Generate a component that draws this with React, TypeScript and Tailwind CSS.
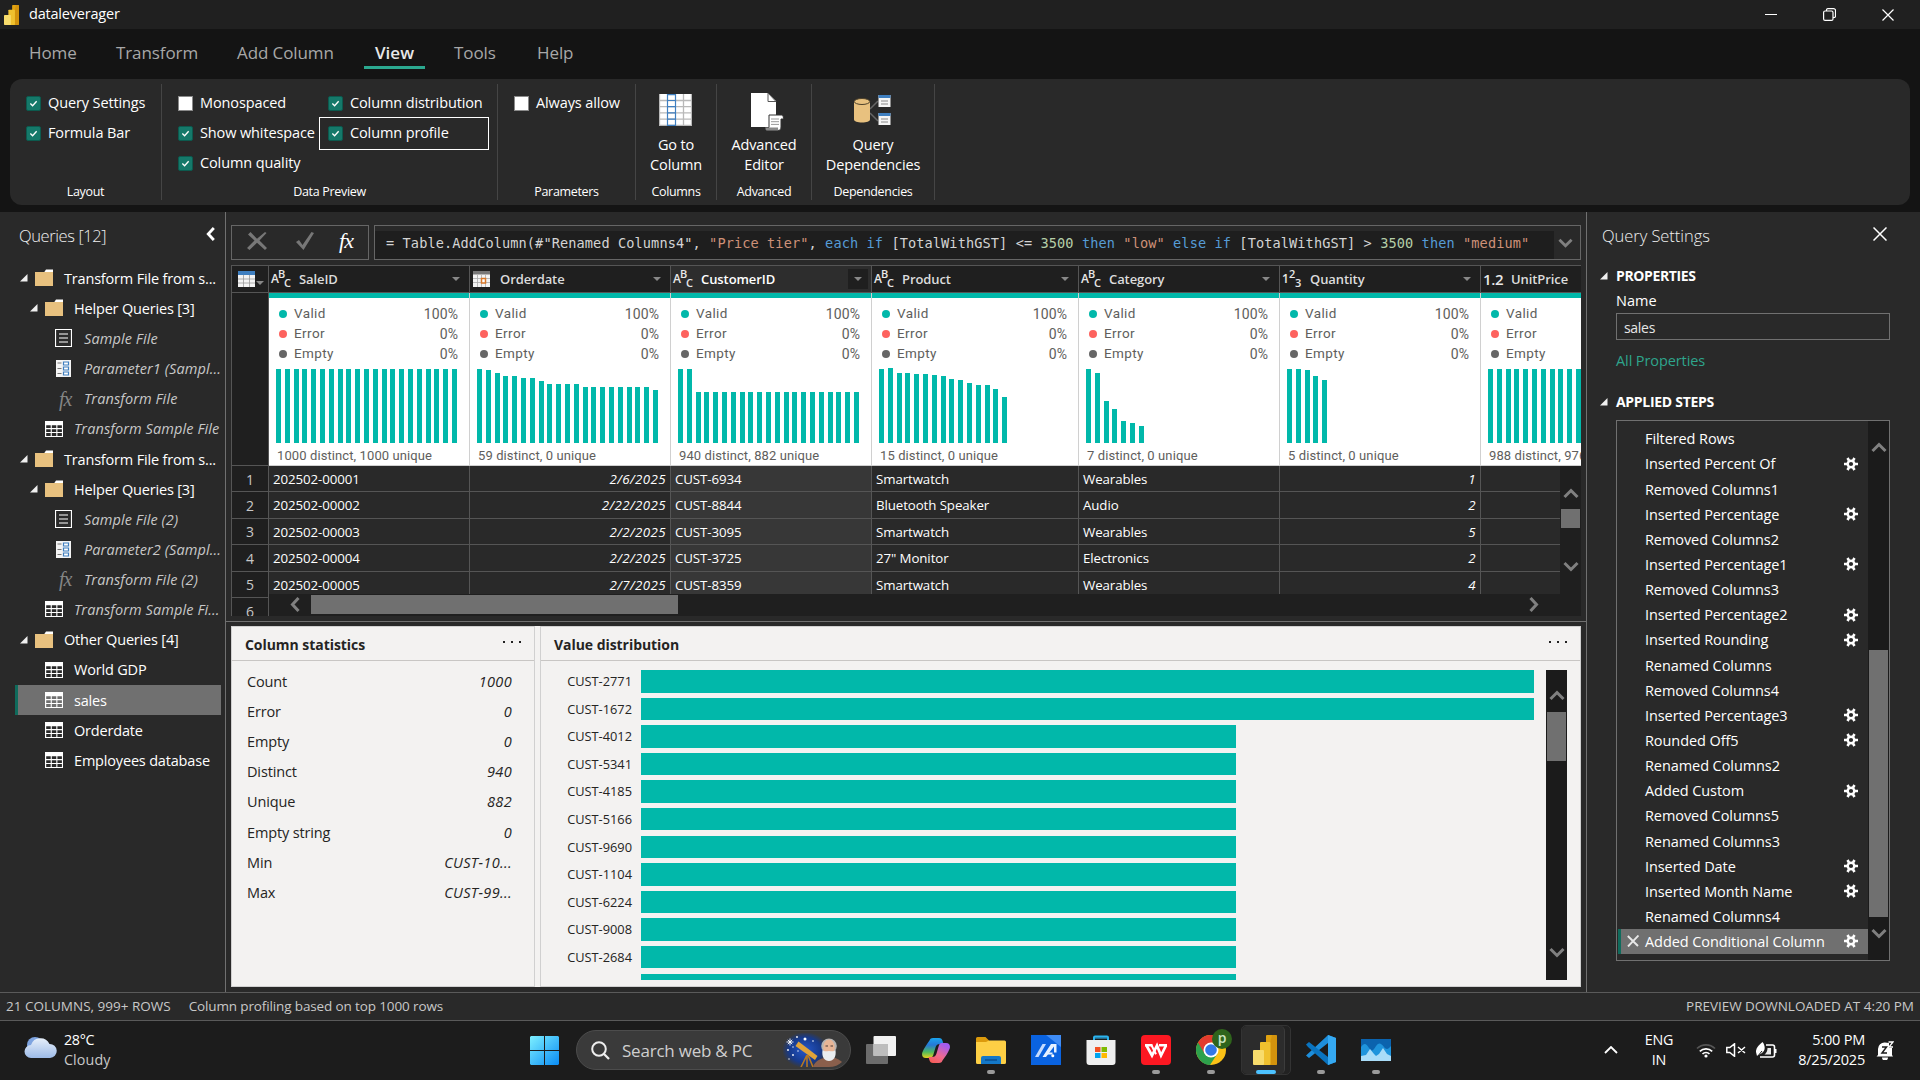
import React from 'react';

type IconKind = 'folder' | 'list' | 'param' | 'fx' | 'table';

/* ---------- small glyphs ---------- */

function PowerBI({ className }: { className: string }) {
  return (
    <svg viewBox="0 0 24 30" preserveAspectRatio="none" className={className}>
      <rect x="13" y="0" width="11" height="30" rx="1" fill="#e0a210" />
      <path d="M19 0h4a1 1 0 0 1 1 1v28a1 1 0 0 1-1 1h-6V9z" fill="#c9860b" opacity=".55" />
      <rect x="7" y="7" width="10.500" height="23" rx="1" fill="#f0c12e" />
      <rect x="0" y="15" width="11" height="15" rx="1" fill="#f8dc6c" />
    </svg>
  );
}

function Check({ on, label }: { on?: boolean; label: string }) {
  return (
    <div className="flex h-[30px] items-center gap-[7px]">
      {on ? (
        <div className="flex h-[15px] w-[15px] items-center justify-center rounded-[2px] border border-[#0c5a4e] bg-[#15796a]">
          <svg viewBox="0 0 10 10" className="h-[9px] w-[9px]"><path d="M1.500 5l2.500 2.500L8.500 2.500" fill="none" stroke="#fff" strokeWidth="1.500" /></svg>
        </div>
      ) : (
        <div className="h-[15px] w-[15px] border border-[#8a8a8a] bg-white" />
      )}
      <span className="whitespace-nowrap text-[14.500px] leading-none tracking-[-0.12px]">{label}</span>
    </div>
  );
}

function Chevron({ dir, className }: { dir: 'up' | 'down' | 'left' | 'right'; className: string }) {
  const d = { up: 'M1.500 10L8 3.500 14.500 10', down: 'M1.500 4L8 10.500 14.500 4', left: 'M10.500 1L4.500 7.500 10.500 14', right: 'M5.500 1l6 6.500-6 6.500' }[dir];
  return (
    <svg viewBox="0 0 16 15" className={className}><path d={d} fill="none" stroke="currentColor" strokeWidth="3" /></svg>
  );
}

function TableIcon({ className }: { className: string }) {
  return (
    <svg viewBox="0 0 18 16" className={className}>
      <path d="M0 0h18v16H0z" fill="#fff" />
      <path d="M1.200 4.200h4.500v2.900H1.200zM6.800 4.200h4.500v2.900H6.800zM12.400 4.200h4.500v2.900h-4.500zM1.200 8.200h4.500v2.800H1.200zM6.800 8.200h4.500v2.800H6.800zM12.400 8.200h4.500v2.800h-4.500zM1.200 12.100h4.500v2.800H1.200zM6.800 12.100h4.500v2.800H6.800zM12.400 12.100h4.500v2.800h-4.500z" fill="currentColor" />
    </svg>
  );
}

function NodeIcon({ kind, selected }: { kind: IconKind; selected?: boolean }) {
  if (kind === 'folder')
    return (
      <svg viewBox="0 0 18 17" className="mb-px h-[17px] w-[18px]">
        <path d="M9 3.500L11 .5h7V5H9z" fill="#fff" />
        <path d="M0 3h18v14H0z" fill="#e8c17f" />
        <path d="M11 1.500h6.500V3H10z" fill="#fff" />
      </svg>
    );
  if (kind === 'list')
    return (
      <svg viewBox="0 0 17 18" className="h-[18px] w-[17px]">
        <path d="M.5.500h16v17H.5zM4 5h9M4 9h9M4 13h9" fill="none" stroke="#fff" strokeWidth="1.200" />
      </svg>
    );
  if (kind === 'param')
    return (
      <svg viewBox="0 0 15 17" className="mx-[1px] h-[17px] w-[15px]">
        <path d="M0 0h15v17H0z" fill="#f4f4f4" />
        <path d="M1.500 3h4M1.500 8.500h4M1.500 13.500h4" stroke="#777" strokeWidth="1" />
        <path d="M7.500 2h5v3h-5zM7.500 7h5v3h-5zM7.500 12h5v3h-5z" fill="#fff" stroke="#3f7fc0" strokeWidth="1.200" />
      </svg>
    );
  if (kind === 'fx')
    return <span className="w-[17px] pl-[4px] font-['Liberation_Serif',serif] text-[20px] italic leading-none tracking-[-1px] text-[#858585]">fx</span>;
  return <TableIcon className={selected ? 'h-[16px] w-[18px] text-[#707070]' : 'h-[16px] w-[18px] text-[#292929]'} />;
}

function Tri() {
  return (
    <svg viewBox="0 0 8 8" className="h-[8px] w-[8px]"><path d="M7.500 0v7.500H0z" fill="#f0f0f0" /></svg>
  );
}

function Gear() {
  return (
    <svg viewBox="0 0 14 14" className="h-[14px] w-[14px]">
      <g stroke="#fff" strokeWidth="2.600">
        <path d="M0 7h3M11 7h3M3.500 1l1.500 2.600M9 10.400l1.500 2.600M3.500 13L5 10.400M9 3.600L10.500 1" />
      </g>
      <circle cx="7" cy="7" r="3.300" fill="none" stroke="#fff" strokeWidth="2.400" />
    </svg>
  );
}

function Dots() {
  return (
    <div className="mb-[3px] flex gap-[6px]">
      {[0, 1, 2].map((i) => <span key={i} className="h-[2px] w-[2px] bg-[#222]" />)}
    </div>
  );
}

/* ---------- ribbon ---------- */

const tabs: [string, string][] = [
  ['Home', 'w-[47px]'], ['Transform', 'w-[80px]'], ['Add Column', 'w-[98px]'], ['View', 'w-[61px]'], ['Tools', 'w-[43px]'], ['Help', 'w-[37px]'],
];

function Group({ label, className, children }: { label: string; className: string; children: React.ReactNode }) {
  return (
    <div className={`flex h-[116px] shrink-0 flex-col justify-between border-r border-[#454545] ${className}`}>
      {children}
      <div className="pb-[2px] text-center text-[12.500px] leading-[12px] tracking-[-0.32px]">{label}</div>
    </div>
  );
}

function BigButton({ icon, a, b }: { icon: React.ReactNode; a: string; b: string }) {
  return (
    <div className="flex flex-col items-center pt-[8px]">
      <div className="flex h-[43px] items-start">{icon}</div>
      <div className="text-center text-[14.500px] leading-[20px] tracking-[-0.15px]">{a}<br />{b}</div>
    </div>
  );
}

function Ribbon() {
  return (
    <div className="mx-[10px] flex h-[126px] rounded-[12px] bg-[#292929] py-[5px] text-white">
      <Group label="Layout" className="w-[152px]">
        <div className="pl-[16px] pt-[4px]"><Check on label="Query Settings" /><Check on label="Formula Bar" /></div>
      </Group>
      <Group label="Data Preview" className="w-[336px]">
        <div className="flex pl-[16px] pt-[4px]">
          <div className="w-[141px]"><Check label="Monospaced" /><Check on label="Show whitespace" /><Check on label="Column quality" /></div>
          <div>
            <div className="pl-[9px]"><Check on label="Column distribution" /></div>
            <div className="-mt-px flex h-[33px] w-[170px] items-center border border-white pl-[8px]"><Check on label="Column profile" /></div>
          </div>
        </div>
      </Group>
      <Group label="Parameters" className="w-[138px]">
        <div className="pl-[16px] pt-[4px]"><Check label="Always allow" /></div>
      </Group>
      <Group label="Columns" className="w-[81px]">
        <BigButton a="Go to" b="Column" icon={
          <svg viewBox="0 0 33 32" className="mr-[2px] mt-[2px] h-[32px] w-[33px]">
            <path d="M0 0h33v32H0z" fill="#fff" />
            <path d="M0 6.500h33M0 12.700h33M0 18.900h33M0 25.100h33M0 31.500h33M24.500 0v32M32.500 0v32M.5 0v32" stroke="#b9b9b9" strokeWidth="1.300" />
            <path d="M8.500.6h8v30.800h-8zM8.500 6.500h8M8.500 12.700h8M8.500 18.900h8M8.500 25.100h8" fill="none" stroke="#3f7fc0" strokeWidth="1.200" />
          </svg>} />
      </Group>
      <Group label="Advanced" className="w-[95px]">
        <BigButton a="Advanced" b="Editor" icon={
          <svg viewBox="0 0 33 38" className="ml-[6px] mt-[1px] h-[38px] w-[33px]">
            <path d="M0 0h17l8 8v26H0z" fill="#fff" />
            <path d="M17 0v8.500h8z" fill="#fff" stroke="#555" strokeWidth="1" />
            <path d="M18 22h13c1.500 0 1.500 4 1.500 4H30v8c0 2-1 3.500-3 3.500H16c-2 0-1.500-3-1.500-3H18z" fill="#fff" stroke="#333" strokeWidth="1" />
            <path d="M14.500 34.500H27c0 2 .5 3 0 3H16c-1.500 0-1.500-3-1.500-3z" fill="#8a8a8a" />
            <path d="M20 26h8M20 28.700h8M20 31.400h8" stroke="#999" />
          </svg>} />
      </Group>
      <Group label="Dependencies" className="w-[123px]">
        <BigButton a="Query" b="Dependencies" icon={
          <svg viewBox="0 0 37 32" className="mr-[1px] mt-[3px] h-[32px] w-[37px]">
            <path d="M16 14l8-8M16 18l8 8" stroke="#666" strokeWidth="1.500" />
            <path d="M0 6.500v18c0 2 3.500 3 8 3s8-1 8-3v-18z" fill="#e8c17f" />
            <ellipse cx="8" cy="6.500" rx="7.800" ry="3" fill="#e8c17f" stroke="#4d412b" strokeWidth="1" />
            <path d="M24.500 0h12v12h-12zM24.500 18h12v12h-12z" fill="#f5f5f5" />
            <path d="M24.500 0h12v3h-12zM24.500 18h12v3h-12z" fill="#3f7fc0" />
            <path d="M27 6h7M27 9h7M27 24h7M27 27h7" stroke="#888" strokeWidth="1.200" />
          </svg>} />
      </Group>
    </div>
  );
}

/* ---------- queries tree ---------- */

const tree: { level: number; icon: IconKind; label: string; italic?: boolean; selected?: boolean }[] = [
  { level: 0, icon: 'folder', label: 'Transform File from s...' },
  { level: 1, icon: 'folder', label: 'Helper Queries [3]' },
  { level: 2, icon: 'list', label: 'Sample File', italic: true },
  { level: 2, icon: 'param', label: 'Parameter1 (Sampl...', italic: true },
  { level: 2, icon: 'fx', label: 'Transform File', italic: true },
  { level: 1, icon: 'table', label: 'Transform Sample File', italic: true },
  { level: 0, icon: 'folder', label: 'Transform File from s...' },
  { level: 1, icon: 'folder', label: 'Helper Queries [3]' },
  { level: 2, icon: 'list', label: 'Sample File (2)', italic: true },
  { level: 2, icon: 'param', label: 'Parameter2 (Sampl...', italic: true },
  { level: 2, icon: 'fx', label: 'Transform File (2)', italic: true },
  { level: 1, icon: 'table', label: 'Transform Sample Fi...', italic: true },
  { level: 0, icon: 'folder', label: 'Other Queries [4]' },
  { level: 1, icon: 'table', label: 'World GDP' },
  { level: 1, icon: 'table', label: 'sales', selected: true },
  { level: 1, icon: 'table', label: 'Orderdate' },
  { level: 1, icon: 'table', label: 'Employees database' },
];

const indent = ['pl-[2px]', 'pl-[12px]', 'pl-[22px]'];

function QueriesPanel() {
  return (
    <div className="w-[226px] shrink-0 overflow-hidden border-r border-[#707070] pl-[15px] pr-[4px]">
      <div className="flex h-[51px] items-start justify-between pl-[4px] pr-[2px] pt-[14px]">
        <span className="text-[16.500px] font-light leading-[20px] tracking-[-0.4px] text-[#f0f0f0]">Queries [12]</span>
        <Chevron dir="left" className="mt-px h-[14px] w-[15px] text-white" />
      </div>
      {tree.map((n, i) => (
        <div key={i} className={`flex h-[30.140px] items-center border-l-[3px] ${n.selected ? 'border-[#0f6b5c] bg-[#707070]' : 'border-transparent'}`}>
          <div className={`flex items-center ${indent[n.level]}`}>
            <div className="w-[15px]">{n.icon === 'folder' && <Tri />}</div>
            <div className="flex w-[29px] items-center"><NodeIcon kind={n.icon} selected={n.selected} /></div>
            <span className={`whitespace-nowrap pt-[2px] text-[14.500px] leading-none ${n.italic ? 'italic tracking-[0.1px] text-[#c8c8c8]' : 'tracking-[-0.18px] text-white'}`}>{n.label}</span>
          </div>
        </div>
      ))}
    </div>
  );
}

/* ---------- formula bar ---------- */

const formula: [string, string][] = [
  ['= Table.AddColumn(#"Renamed Columns4", ', 'text-[#d4d4d4]'],
  ['"Price tier"', 'text-[#ce9178]'],
  [', ', 'text-[#d4d4d4]'],
  ['each if ', 'text-[#569cd6]'],
  ['[TotalWithGST] <= ', 'text-[#d4d4d4]'],
  ['3500 ', 'text-[#b5cea8]'],
  ['then ', 'text-[#569cd6]'],
  ['"low" ', 'text-[#ce9178]'],
  ['else if ', 'text-[#569cd6]'],
  ['[TotalWithGST] > ', 'text-[#d4d4d4]'],
  ['3500 ', 'text-[#b5cea8]'],
  ['then ', 'text-[#569cd6]'],
  ['"medium"', 'text-[#ce9178]'],
];

function FormulaBar() {
  return (
    <div className="flex h-[35px] gap-[5px]">
      <div className="flex w-[138px] items-center justify-between border border-[#666] pb-[3px] pl-[15px] pr-[15px]">
        <svg viewBox="0 0 20 18" className="h-[18px] w-[20px]"><path d="M1 2.500L3.500 0 10 6.800 18 0l1.500 1-7 7.500L20 16l-2 2-8-7.200L2.500 18 0 16l7.500-7.500z" fill="#777" /></svg>
        <svg viewBox="0 0 18 18" className="ml-[4px] h-[18px] w-[18px]"><path d="M0 10l3-2 3.500 5L15.500 0 18 1 7.500 18z" fill="#777" /></svg>
        <span className="font-['Liberation_Serif',serif] text-[22px] italic leading-none tracking-[-1px] text-white">fx</span>
      </div>
      <div className="flex flex-1 border border-[#666] pt-[5px]">
        <div className="flex w-[1179px] items-center overflow-hidden bg-[#1e1e1e] pl-[11px]">
          <span className="whitespace-pre pb-[3px] font-['DejaVu_Sans_Mono',monospace] text-[13.600px] leading-none tracking-[0.1px]">
            {formula.map(([t, c], i) => <span key={i} className={c}>{t}</span>)}
          </span>
        </div>
        <div className="flex flex-1 items-center justify-center pb-[4px] pr-[4px] text-[#808080]">
          <Chevron dir="down" className="h-[14px] w-[15px]" />
        </div>
      </div>
    </div>
  );
}

/* ---------- data grid ---------- */

const full = (n: number, h: number) => Array.from({ length: n }, () => h);

const columns: { name: string; type: 'abc' | 'date' | '123' | '1.2'; w: string; bars: number[]; note: string; data: string[]; right?: boolean; selected?: boolean }[] = [
  { name: 'SaleID', type: 'abc', w: 'w-[201px]', bars: full(21, 74), note: '1000 distinct, 1000 unique', data: ['202502-00001', '202502-00002', '202502-00003', '202502-00004', '202502-00005'] },
  { name: 'Orderdate', type: 'date', w: 'w-[201px]', bars: [74, 73, 70, 67, 67, 65, 65, 62, 59, 59, 59, 59, ...full(8, 56), 53], note: '59 distinct, 0 unique', data: ['2/6/2025', '2/22/2025', '2/2/2025', '2/2/2025', '2/7/2025'], right: true },
  { name: 'CustomerID', type: 'abc', w: 'w-[201px]', bars: [74, 74, ...full(19, 51)], note: '940 distinct, 882 unique', data: ['CUST-6934', 'CUST-8844', 'CUST-3095', 'CUST-3725', 'CUST-8359'], selected: true },
  { name: 'Product', type: 'abc', w: 'w-[207px]', bars: [74, 75, 70, 70, 69, 69, 68, 67, 64, 63, 60, 58, 58, 54, 46], note: '15 distinct, 0 unique', data: ['Smartwatch', 'Bluetooth Speaker', 'Smartwatch', '27" Monitor', 'Smartwatch'] },
  { name: 'Category', type: 'abc', w: 'w-[201px]', bars: [74, 70, 42, 34, 22, 20, 17], note: '7 distinct, 0 unique', data: ['Wearables', 'Audio', 'Wearables', 'Electronics', 'Wearables'] },
  { name: 'Quantity', type: '123', w: 'w-[201px]', bars: [74, 74, 73, 67, 63], note: '5 distinct, 0 unique', data: ['1', '2', '5', '2', '4'], right: true },
  { name: 'UnitPrice', type: '1.2', w: 'w-[101px]', bars: full(11, 74), note: '988 distinct, 976', data: ['', '', '', '', ''] },
];

function TypeIcon({ type }: { type: string }) {
  if (type === 'date')
    return (
      <svg viewBox="0 0 17 16" className="ml-px h-[16px] w-[17px]">
        <path d="M0 0h17v16H0z" fill="#f3f3f3" />
        <path d="M0 0h17v3.500H0z" fill="#777" />
        <path d="M0 7.500h17M0 11.500h17M4.500 4v12M8.500 4v12M12.500 4v12" stroke="#aaa" strokeWidth=".8" />
        <path d="M8.500 7.500h4v4.500h-4z" fill="#fff" stroke="#d8782a" strokeWidth="1.500" />
      </svg>
    );
  if (type === '1.2') return <span className="text-[15px] font-semibold leading-none tracking-[-0.3px] text-[#e8e8e8]">1.2</span>;
  const [a, b, c] = type === 'abc' ? ['A', 'B', 'C'] : ['1', '2', '3'];
  return (
    <div className="flex h-[18px] w-[20px] items-start font-semibold leading-none text-[#e8e8e8]">
      <span className="w-[7px] pt-[3px] text-[12px]">{a}</span>
      <span className="-mt-[2px] w-[6px] text-[11px]">{b}</span>
      <span className="pt-[7px] text-[11px]">{c}</span>
    </div>
  );
}

const quality: [string, string, string][] = [
  ['Valid', '100%', 'bg-[#01b8aa]'], ['Error', '0%', 'bg-[#fd625e]'], ['Empty', '0%', 'bg-[#666666]'],
];

function DataGrid() {
  return (
    <div className="mt-[5px] flex h-[351px] overflow-hidden border-t border-[#555]">
      <div className="w-[38px] shrink-0 overflow-hidden border-x border-[#555] bg-[#1f1f1f]">
        <div className="flex h-[27px] items-center gap-[1px] border-b border-[#555] pl-[6px]">
          <svg viewBox="0 0 17 16" className="h-[16px] w-[17px]">
            <path d="M0 0h17v16H0z" fill="#f3f3f3" /><path d="M0 0h17v4H0z" fill="#3f7fc0" />
            <path d="M0 8h17M0 12h17M5.500 4v12M11.500 4v12" stroke="#999" strokeWidth=".8" />
          </svg>
          <svg viewBox="0 0 8 4" className="mt-[8px] h-[4px] w-[8px]"><path d="M0 0h8L4 4z" fill="#888" /></svg>
        </div>
        <div className="h-[173px] border-b border-[#555]" />
        {[1, 2, 3, 4, 5, 6].map((n) => (
          <div key={n} className="flex h-[26.400px] items-center justify-center border-b border-[#555] pt-[2px] text-[14px] leading-none text-[#c8c8c8]">{n}</div>
        ))}
      </div>
      <div className="flex w-[1312px] flex-col">
        <div className="flex h-[200px] w-full overflow-hidden">
          {columns.map((c) => (
            <div key={c.name} className={`${c.w} shrink-0`}>
              <div className={`flex h-[27px] items-center border-b border-r border-[#555] pl-[2px] pr-[3px] ${c.selected ? 'bg-[#2d2d2d]' : 'bg-[#1f1f1f]'}`}>
                <div className="w-[28px] shrink-0"><TypeIcon type={c.type} /></div>
                <span className={`flex-1 text-[13px] font-semibold leading-none tracking-[-0.08px] ${c.selected ? 'text-white' : 'text-[#dcdcdc]'}`}>{c.name}</span>
                {c.type !== '1.2' && (
                  <div className={`flex h-[20px] w-[20px] items-center justify-center ${c.selected ? 'bg-[#1f1f1f]' : ''}`}>
                    <svg viewBox="0 0 8 4" className="h-[4px] w-[8px]"><path d="M0 0h8L4 4z" fill="#888" /></svg>
                  </div>
                )}
              </div>
              <div className="h-[173px] overflow-hidden border-b border-r border-[#d0d0d0] bg-white font-['Roboto',sans-serif] text-[#605e5c]">
                <div className="h-[5px] bg-[#01b8aa]" />
                <div className="pl-[10px] pr-[11px] pt-[6px]">
                  {quality.map(([l, v, dot]) => (
                    <div key={l} className="flex h-[20px] items-center text-[13.500px] leading-none tracking-[0.4px]">
                      <span className={`mb-px mr-[7px] h-[8px] w-[8px] rounded-full ${dot}`} />
                      <span className="flex-1">{l}</span>
                      {c.type !== '1.2' && <span className="text-[14px] tracking-[0.1px]">{v}</span>}
                    </div>
                  ))}
                </div>
                <div className="-mt-px ml-[7px] flex h-[80px] items-end gap-[3.800px]">
                  {c.bars.map((h, i) => <span key={i} className="w-[5px] shrink-0 bg-[#01b8aa]" style={{ height: h }} />)}
                </div>
                <div className="whitespace-nowrap pl-[8px] pt-[6px] text-[13px] leading-[13px] tracking-[0.1px]">{c.note}</div>
              </div>
            </div>
          ))}
        </div>
        <div className="flex h-[150px]">
          <div className="flex w-[1291px] flex-col">
            <div className="flex h-[128px] overflow-hidden">
              {columns.map((c) => (
                <div key={c.name} className={`${c.w} shrink-0 ${c.selected ? 'bg-[#373737]' : 'bg-[#292929]'}`}>
                  {c.data.map((v, i) => (
                    <div key={i} className={`flex h-[26.400px] items-center border-b border-r border-[#555] pl-[4px] pr-[4px] pt-[2px] text-[13.300px] leading-none text-white ${c.right ? 'justify-end italic tracking-[0.4px]' : 'tracking-[-0.1px]'}`}>{v}</div>
                  ))}
                </div>
              ))}
            </div>
            <div className="flex flex-1 items-center bg-[#1f1f1f] pb-[2px] pl-[19px] text-[#808080]">
              <Chevron dir="left" className="h-[15px] w-[16px]" />
              <div className="ml-[7px] mr-[847px] h-[19px] w-[367px] shrink-0 bg-[#707070]" />
              <Chevron dir="right" className="h-[15px] w-[16px] shrink-0" />
            </div>
          </div>
          <div className="flex w-[21px] flex-col items-center bg-[#1f1f1f] pt-[21px] text-[#808080]">
            <Chevron dir="up" className="h-[15px] w-[16px]" />
            <div className="mt-[7px] h-[19px] w-[19px] bg-[#707070]" />
            <Chevron dir="down" className="mt-[31px] h-[15px] w-[16px]" />
          </div>
        </div>
      </div>
    </div>
  );
}

/* ---------- profile panels ---------- */

const stats: [string, string][] = [
  ['Count', '1000'], ['Error', '0'], ['Empty', '0'], ['Distinct', '940'], ['Unique', '882'], ['Empty string', '0'], ['Min', 'CUST-10...'], ['Max', 'CUST-99...'],
];
const values = ['CUST-2771', 'CUST-1672', 'CUST-4012', 'CUST-5341', 'CUST-4185', 'CUST-5166', 'CUST-9690', 'CUST-1104', 'CUST-6224', 'CUST-9008', 'CUST-2684', ''];

function ProfilePanels() {
  return (
    <div className="flex h-[361px] gap-[5px] bg-[#f3f2f1] text-[#252423]">
      <div className="w-[304px] border border-[#d0d0d0]">
        <div className="flex h-[34px] items-center justify-between border-b border-[#c8c6c4] pl-[13px] pr-[13px]">
          <span className="pt-[3px] text-[14px] font-bold leading-none tracking-[-0.05px]">Column statistics</span>
          <Dots />
        </div>
        <div className="pl-[15px] pr-[22px] pt-[6px]">
          {stats.map(([k, v]) => (
            <div key={k} className="flex h-[30.150px] items-center justify-between text-[14.500px] leading-none tracking-[-0.15px]">
              <span>{k}</span><span className="italic tracking-[0.35px]">{v}</span>
            </div>
          ))}
        </div>
      </div>
      <div className="flex-1 border border-[#d0d0d0]">
        <div className="flex h-[34px] items-center justify-between border-b border-[#c8c6c4] pl-[13px] pr-[13px]">
          <span className="pt-[3px] text-[14px] font-bold leading-none tracking-[-0.05px]">Value distribution</span>
          <Dots />
        </div>
        <div className="mt-[9px] flex h-[310px]">
          <div className="flex-1 overflow-hidden">
            {values.map((v, i) => (
              <div key={i} className="flex h-[27.600px] items-start">
                <span className="w-[91px] shrink-0 pt-[5px] text-right text-[12.800px] leading-[13px]">{v}</span>
                <span className={`ml-[9px] h-[22.500px] bg-[#01b8aa] ${i < 2 ? 'w-[893px]' : 'w-[595px]'}`} />
              </div>
            ))}
          </div>
          <div className="mr-[13px] flex w-[21px] flex-col items-center bg-[#1b1b1b] pt-[19px] text-[#808080]">
            <Chevron dir="up" className="h-[15px] w-[16px]" />
            <div className="mt-[8px] h-[49px] w-[19px] bg-[#707070]" />
            <Chevron dir="down" className="mt-[184px] h-[15px] w-[16px]" />
          </div>
        </div>
      </div>
    </div>
  );
}

/* ---------- query settings ---------- */

const steps: [string, boolean][] = [
  ['Filtered Rows', false], ['Inserted Percent Of', true], ['Removed Columns1', false], ['Inserted Percentage', true], ['Removed Columns2', false],
  ['Inserted Percentage1', true], ['Removed Columns3', false], ['Inserted Percentage2', true], ['Inserted Rounding', true], ['Renamed Columns', false],
  ['Removed Columns4', false], ['Inserted Percentage3', true], ['Rounded Off5', true], ['Renamed Columns2', false], ['Added Custom', true],
  ['Removed Columns5', false], ['Renamed Columns3', false], ['Inserted Date', true], ['Inserted Month Name', true], ['Renamed Columns4', false],
  ['Added Conditional Column', true],
];

function SettingsPanel() {
  return (
    <div className="flex-1 border-l border-[#707070] pl-[13px] text-white">
      <div className="flex h-[53px] items-start justify-between pl-[2px] pr-[33px] pt-[14px]">
        <span className="text-[16.500px] font-light leading-[20px] tracking-[-0.05px] text-[#f0f0f0]">Query Settings</span>
        <svg viewBox="0 0 14 14" className="mt-px h-[14px] w-[14px]"><path d="M.5.500l13 13M13.500.500l-13 13" stroke="#fff" strokeWidth="1.500" /></svg>
      </div>
      <div className="flex h-[21px] items-center gap-[8px]"><Tri /><span className="text-[14px] font-bold leading-none tracking-[-0.37px]">PROPERTIES</span></div>
      <div className="ml-[16px] mr-[30px]">
        <div className="flex h-[27px] items-center pt-[4px] text-[14.500px] leading-none">Name</div>
        <div className="flex h-[27px] items-center border border-[#707070] pl-[7px] pt-[2px] text-[14px] leading-none tracking-[-0.3px] text-[#e6e6e6]">sales</div>
        <div className="flex h-[42px] items-center text-[14.500px] leading-none tracking-[-0.1px] text-[#2ea58c]">All Properties</div>
      </div>
      <div className="mt-[9px] flex h-[21px] items-center gap-[8px]"><Tri /><span className="pt-px text-[14px] font-bold leading-none tracking-[-0.3px]">APPLIED STEPS</span></div>
      <div className="ml-[16px] mr-[30px] mt-[8px] flex h-[541px] border border-[#707070]">
        <div className="flex-1 pl-px pt-[5px]">
          {steps.map(([s, gear], i) => {
            const sel = i === steps.length - 1;
            return (
              <div key={s} className={`flex h-[25.150px] items-center border-l-[3px] pr-[10px] ${sel ? 'border-[#0f6b5c] bg-[#707070]' : 'border-transparent'}`}>
                <div className="flex w-[24px] items-center pl-[6px]">
                  {sel && <svg viewBox="0 0 12 12" className="h-[12px] w-[12px]"><path d="M.8 1L11 11M11.500.500L1 11.500" stroke="#e8e8e8" strokeWidth="1.900" /></svg>}
                </div>
                <span className="flex-1 whitespace-nowrap pt-[2px] text-[14.500px] leading-none tracking-[-0.08px]">{s}</span>
                {gear && <Gear />}
              </div>
            );
          })}
        </div>
        <div className="flex w-[21px] flex-col items-center bg-[#1b1b1b] pt-[20px] text-[#808080]">
          <Chevron dir="up" className="h-[15px] w-[16px]" />
          <div className="mt-[194px] h-[267px] w-[19px] bg-[#707070]" />
          <Chevron dir="down" className="mt-[9px] h-[15px] w-[16px]" />
        </div>
      </div>
    </div>
  );
}

/* ---------- taskbar ---------- */

function Pin({ children, run }: { children: React.ReactNode; run?: boolean }) {
  return (
    <div className="flex w-[55px] shrink-0 flex-col items-center pt-[14px]">
      <div className="flex h-[30px] w-[30px] items-center justify-center">{children}</div>
      {run && <div className="mt-[5px] h-[4px] w-[8px] rounded-full bg-[#9a9a9a]" />}
    </div>
  );
}

function Taskbar() {
  return (
    <div className="flex h-[59px] items-start bg-[#1c1c1c] text-white">
      <div className="flex w-[506px] shrink-0 items-center gap-[7px] pl-[24px] pt-[9px]">
        <svg viewBox="0 0 33 24" className="mb-[4px] h-[24px] w-[33px]">
          <defs><linearGradient id="cl" x1="0" y1="0" x2="0" y2="1"><stop offset="0" stopColor="#e6effa" /><stop offset="1" stopColor="#9dbbe8" /></linearGradient></defs>
          <circle cx="11" cy="9" r="8" fill="#7ea4e0" />
          <path d="M7 22a6.500 6.500 0 0 1 0-13 10 10 0 0 1 18.500-1A7 7 0 0 1 26 22z" fill="url(#cl)" />
        </svg>
        <div className="text-[14.300px] leading-[20px]"><div className="tracking-[-0.3px]">28°C</div><div className="tracking-[0.1px] text-[#c8c8c8]">Cloudy</div></div>
      </div>
      <div className="flex w-[70px] shrink-0 justify-start pl-[24px] pt-[15px]">
        <svg viewBox="0 0 29 29" className="h-[29px] w-[29px]">
          <defs><linearGradient id="wn" x1="0" y1="0" x2="1" y2="1"><stop offset="0" stopColor="#7df0ff" /><stop offset="1" stopColor="#0a8cf5" /></linearGradient></defs>
          <path d="M1 0h13v14H0V1zM15 0h13l1 1v13H15zM0 15h14v14H1l-1-1zM15 15h14v13l-1 1H15z" fill="url(#wn)" />
        </svg>
      </div>
      <div className="mt-[9px] flex h-[40px] w-[275px] shrink-0 items-center rounded-full border border-[#4c4c4c] bg-[#3a3a3a] pl-[14px]">
        <svg viewBox="0 0 19 19" className="h-[19px] w-[19px]"><circle cx="8" cy="8" r="6.800" fill="none" stroke="#eee" strokeWidth="2" /><path d="M13 13l5 5" stroke="#eee" strokeWidth="2.300" /></svg>
        <span className="ml-[12px] w-[161px] whitespace-nowrap pt-px text-[17px] leading-none tracking-[-0.22px] text-[#cfcfcf]">Search web &amp; PC</span>
        <svg viewBox="0 0 60 34" className="h-[34px] w-[60px]">
          <defs>
            <radialGradient id="sky"><stop offset="0" stopColor="#2456c8" /><stop offset=".7" stopColor="#173a8c" /><stop offset="1" stopColor="#173a8c" stopOpacity="0" /></radialGradient>
          </defs>
          <ellipse cx="22" cy="17" rx="23" ry="18" fill="url(#sky)" />
          <g fill="#fff"><circle cx="22" cy="6" r="1.500" /><circle cx="14" cy="4" r=".9" /><circle cx="5" cy="17" r=".9" /><circle cx="10" cy="22" r=".9" /><circle cx="30" cy="8" r=".8" /><circle cx="6" cy="26" r=".7" /><circle cx="15" cy="18" r=".7" /><circle cx="10" cy="14" r=".7" /></g>
          <path d="M7 5.500v7M3.500 9h7M4.800 6.800l4.400 4.400M9.200 6.800l-4.400 4.400" stroke="#fff" strokeWidth=".9" />
          <path d="M12.500 13L32 27l2.500-4L15.500 8.500z" fill="#e0a33a" />
          <path d="M24 22l-6 12M24 22v12M25 22l5 12" stroke="#b87820" strokeWidth="1.600" />
          <path d="M30 34c2-7 9-9 16-10 6 0 11 3 13 5-3 3-8 5-13 5z" fill="#8a5f4c" />
          <ellipse cx="46" cy="13" rx="7.800" ry="7.500" fill="#b4b4b4" />
          <ellipse cx="46" cy="14.500" rx="5.800" ry="8" fill="#e8b596" />
          <path d="M42.500 13h2.500M47.500 13H50" stroke="#4a3a36" strokeWidth="1" />
          <path d="M39.500 17c2 2 4 1 6.500 1s4.500 1 6.500-1c1 7-2 11-6.500 11s-7.500-4-6.500-11z" fill="#e9edf0" />
        </svg>
      </div>
      <div className="flex pl-[2px]">
        <Pin>
          <svg viewBox="0 0 30 28" className="h-[28px] w-[30px]"><rect x="0" y="8" width="22" height="20" rx="1" fill="#6c6c6c" /><rect x="7.500" y="0" width="22.500" height="20" rx="1" fill="#f1f1f1" /><path d="M7.500 8H22v12H7.500z" fill="#bdbdbd" /></svg>
        </Pin>
        <Pin>
          <svg viewBox="0 0 28 25" className="h-[25px] w-[28px]">
            <defs>
              <linearGradient id="c1" x1="0" y1="0" x2="0" y2="1"><stop offset="0" stopColor="#1aa5ee" /><stop offset=".35" stopColor="#2678d8" /><stop offset=".7" stopColor="#4fb95e" /><stop offset="1" stopColor="#e8d21c" /></linearGradient>
              <linearGradient id="c2" x1=".6" y1="0" x2="0" y2="1"><stop offset="0" stopColor="#a45cf0" /><stop offset=".5" stopColor="#ee6a90" /><stop offset="1" stopColor="#f85a4a" /></linearGradient>
            </defs>
            <path d="M7.500 2.500C8.300.7 9.200 0 11 0h6c2.200 0 3 1 3.600 3l.9 3H18c-2.500 0-3.800 1-4.500 3.500l-2.300 7.800C10.500 19.500 9 20 7 20H4C.5 20-.5 17.500.3 14.500 2 10 5 6 7.500 2.500z" fill="url(#c1)" />
            <path d="M20.500 22.500C19.700 24.300 18.800 25 17 25h-6c-2.200 0-3-1-3.600-3l-.9-3H10c2.500 0 3.800-1 4.500-3.500l2.300-7.800C17.500 5.500 19 5 21 5h3c3.500 0 4.500 2.500 3.700 5.500-1.700 4.500-4.700 8.500-7.200 12z" fill="url(#c2)" />
          </svg>
        </Pin>
        <Pin run>
          <svg viewBox="0 0 30 27" className="h-[27px] w-[30px]"><path d="M0 1.500A1.500 1.500 0 0 1 1.500 0h8L13 3.500V8H0z" fill="#dc9a0c" /><path d="M0 5h10l3-1.500h15.500A1.500 1.500 0 0 1 30 5v20.500a1.500 1.500 0 0 1-1.500 1.500h-27A1.500 1.500 0 0 1 0 25.500z" fill="#fdcf45" /><path d="M5 27v-6a2 2 0 0 1 2-2h16a2 2 0 0 1 2 2v6z" fill="#1478c8" /><path d="M9 23h12" stroke="#0a4f92" strokeWidth="1.500" /></svg>
        </Pin>
        <Pin>
          <svg viewBox="0 0 30 30" className="h-[30px] w-[30px]"><path d="M0 0h30v30H0z" fill="#0a63e0" /><path d="M15 0h15v12z" fill="#3f8cf5" /><path d="M4 22L11.500 9H15L7.500 22z" fill="#c4dcff" /><path d="M11.500 22L20 9h5.500v8.500H23V11.500L15 22z" fill="#e6f1ff" /><path d="M16.500 17.500h5v2h-6.300z" fill="#e6f1ff" /><circle cx="21.800" cy="20.800" r="1.500" fill="#fff" /></svg>
        </Pin>
        <Pin>
          <svg viewBox="0 0 30 30" className="h-[30px] w-[30px]"><path d="M8 8V2.500a1 1 0 0 1 1-1h12a1 1 0 0 1 1 1V8" fill="none" stroke="#2bb3ee" strokeWidth="2" /><path d="M.5 5h29v22a3 3 0 0 1-3 3h-23a3 3 0 0 1-3-3z" fill="#efefef" /><path d="M7.500 5V3h15v2" fill="none" stroke="#2bb3ee" strokeWidth="1" /><path d="M9 12h5.500v5H9z" fill="#f25022" /><path d="M15.500 12H21v5h-5.500z" fill="#7fba00" /><path d="M9 18h5.500v5H9z" fill="#00a4ef" /><path d="M15.500 18H21v5h-5.500z" fill="#ffb900" /></svg>
        </Pin>
        <Pin run>
          <svg viewBox="0 0 30 30" className="h-[30px] w-[30px]"><rect width="30" height="30" rx="4" fill="#fc1822" /><path d="M4 10.300h7.500M18 10.300h8" stroke="#fff" strokeWidth="2.600" /><path d="M5.500 10.500l5.500 10 5-10 4 10 5-10" fill="none" stroke="#fff" strokeWidth="2.700" /><path d="M10.500 10.300l4.500 9" stroke="#fff" strokeWidth="2" /></svg>
        </Pin>
        <div className="relative">
          <Pin run>
            <svg viewBox="0 0 30 30" className="h-[30px] w-[30px]"><circle cx="15" cy="15" r="15" fill="#fbc116" /><path d="M2 7.500A15 15 0 0 0 14 30l7.500-11.500L15 15z" fill="#2da14c" /><path d="M2 7.500A15 15 0 0 1 28 7.500H15l-6.500 11z" fill="#e33b2e" /><circle cx="15" cy="15" r="7.500" fill="#fff" /><circle cx="15" cy="15" r="5.800" fill="#3378e6" /></svg>
          </Pin>
          <div className="absolute left-[29px] top-[8px] flex h-[20px] w-[20px] items-center justify-center rounded-full bg-[#2f641c] pb-[2px] text-[14px] font-semibold leading-none text-[#cde5c2]">p</div>
        </div>
        <div className="ml-[3px] mr-[2px] mt-[4px] flex h-[50px] w-[50px] rounded-[5px] border border-[#333] bg-[#222]">
          <div className="flex h-full w-[43px] flex-col items-center rounded-[5px] border-r border-[#3c3c3c] bg-[#2c2c2c] pt-[9px]">
            <PowerBI className="ml-[4px] h-[30px] w-[24px]" />
            <div className="ml-[6px] mt-[5px] h-[4px] w-[20px] rounded-full bg-[#4cc2ff]" />
          </div>
        </div>
        <Pin run>
          <svg viewBox="0 0 30 30" className="h-[30px] w-[30px]"><path d="M22 0l8 3v24l-8 3V8L3 23l-3-2.500L20 2z" fill="#1e8fdc" /><path d="M22 30L2 12l-2-2.500L3 7l19 15z" fill="#0a74c0" /><path d="M22 0l8 3v24l-8 3z" fill="#35a9f2" /></svg>
        </Pin>
        <Pin run>
          <svg viewBox="0 0 30 22" className="h-[22px] w-[30px]"><path d="M0 0h30v22H0z" fill="#0b63ae" /><path d="M0 8c3-4 5-4 8 1 3 4 4 3 7-2 3-4 5-3 8 1 3 4 5 1 7-1v15H0z" fill="#1f94dc" /><path d="M0 17l5-1 4-6 4 5 2 2 3-2 4-6 4 6 4 2v5H0z" fill="#a9dcf8" /></svg>
        </Pin>
      </div>
      <div className="ml-auto flex items-center pr-[26px] pt-[9px]">
        <svg viewBox="0 0 14 8" className="h-[8px] w-[14px]"><path d="M1 7l6-6 6 6" fill="none" stroke="#fff" strokeWidth="1.800" /></svg>
        <div className="ml-[26px] w-[30px] text-center text-[14.300px] leading-[20px] tracking-[-0.2px]">ENG<br />IN</div>
        <svg viewBox="0 0 20 16" className="ml-[22px] h-[16px] w-[20px]" fill="none" strokeWidth="1.700"><path d="M1 6.500a13 13 0 0 1 18 0" stroke="#555" /><path d="M3.800 9.300a9 9 0 0 1 12.400 0M6.500 12a5 5 0 0 1 7 0" stroke="#fff" /><circle cx="10" cy="14" r="1.600" fill="#fff" /></svg>
        <svg viewBox="0 0 20 14" className="ml-[10px] h-[14px] w-[20px]" fill="none" stroke="#fff" strokeWidth="1.500"><path d="M.8 4.500h3L8.500.8v12.500L3.800 9.500h-3zM12 4l7 6M19 4l-7 6" /></svg>
        <svg viewBox="0 0 21 17" className="ml-[10px] h-[17px] w-[21px]"><path d="M10 3h6.500a2 2 0 0 1 2 2v8a2 2 0 0 1-2 2H4" fill="none" stroke="#fff" strokeWidth="1.600" /><path d="M19 7h1.500v4H19z" fill="#fff" /><path d="M0 10c-.5-4 3-7 6.500-10C9 3 10 8 6 11l-5 3z" fill="#fff" /><path d="M8.500 12.500c2-1.500 3-3.500 3-6.500H15v6.500z" fill="#e8e8e8" /><path d="M1 15l5-6" stroke="#1c1c1c" strokeWidth="1" /></svg>
        <div className="ml-[11px] w-[77px] whitespace-nowrap text-right text-[14.500px] leading-[20px] tracking-[-0.2px]"><div>5:00 PM</div><div>8/25/2025</div></div>
        <svg viewBox="0 0 18 19" className="ml-[11px] h-[19px] w-[18px]"><path d="M2 14V8a6.500 6.500 0 0 1 7-6.500L13 2v5h3v7l1 1.500H.5zM6 16.500h6a3 3 0 0 1-6 0z" fill="#fff" /><path d="M6 6h4.500L6 12h5" fill="none" stroke="#1c1c1c" strokeWidth="1.500" /><path d="M12.500 1H17l-4 5h4" fill="none" stroke="#fff" strokeWidth="1.300" /></svg>
      </div>
    </div>
  );
}

/* ---------- page ---------- */

export default function App() {
  return (
    <div className="flex h-[1080px] w-[1920px] flex-col overflow-hidden bg-[#141414] font-['Open_Sans','Noto_Sans',sans-serif]">
      <div className="flex h-[29px] items-center bg-[#202020] pl-[4px] text-white">
        <PowerBI className="h-[20px] w-[15px]" />
        <span className="ml-[10px] flex-1 text-[14.500px] leading-none tracking-[-0.2px]">dataleverager</span>
        <div className="flex items-center pr-[26px]">
          <svg viewBox="0 0 12 12" className="h-[12px] w-[12px]"><path d="M0 5.500h12" stroke="#fff" /></svg>
          <svg viewBox="0 0 13 13" className="ml-[46px] h-[13px] w-[13px]" fill="none" stroke="#fff" strokeWidth="1.200"><rect x=".6" y="3" width="9.400" height="9.400" rx="1.500" /><path d="M3.500 3V2A1.400 1.400 0 0 1 5 .600h5.500a2 2 0 0 1 2 2V8A1.500 1.500 0 0 1 11 9.500h-1" /></svg>
          <svg viewBox="0 0 12 12" className="ml-[46px] h-[12px] w-[12px]"><path d="M.5.500l11 11M11.500.500l-11 11" stroke="#fff" strokeWidth="1.200" /></svg>
        </div>
      </div>
      <div className="flex h-[50px] pl-[29px] pt-[11px] text-[#a8a8a8]">
        {tabs.map(([t, w], i) => (
          <div key={t} className={`${w} ${['', 'ml-[40px]', 'ml-[41px]', 'ml-[29px]', 'ml-[29px]', 'ml-[40px]'][i]} flex h-[29px] items-center whitespace-nowrap text-[17px] leading-none ${t === 'View' ? 'justify-center border-b-[3px] border-[#2ba88f] pb-px font-semibold text-[#e8e8e8]' : 'pb-[4px] tracking-[-0.1px]'}`}>{t}</div>
        ))}
      </div>
      <Ribbon />
      <div className="mt-[7px] flex h-[780px] bg-[#292929]">
        <QueriesPanel />
        <div className="flex w-[1360px] shrink-0 flex-col">
          <div className="h-[409px] pl-[5px] pr-[5px] pt-[13px]"><FormulaBar /><DataGrid /></div>
          <div className="border-t border-[#707070] pl-[5px] pr-[5px] pt-[4px]"><ProfilePanels /></div>
        </div>
        <SettingsPanel />
      </div>
      <div className="flex h-[29px] items-center border-y border-[#5a5a5a] bg-[#292929] pl-[6px] pr-[6px] text-[13.500px] leading-none text-[#c8c8c8]">
        <span className="tracking-[0px]">21 COLUMNS, 999+ ROWS</span>
        <span className="ml-[18px] flex-1 tracking-[-0.13px]">Column profiling based on top 1000 rows</span>
        <span className="tracking-[-0.03px]">PREVIEW DOWNLOADED AT 4:20 PM</span>
      </div>
      <Taskbar />
    </div>
  );
}
